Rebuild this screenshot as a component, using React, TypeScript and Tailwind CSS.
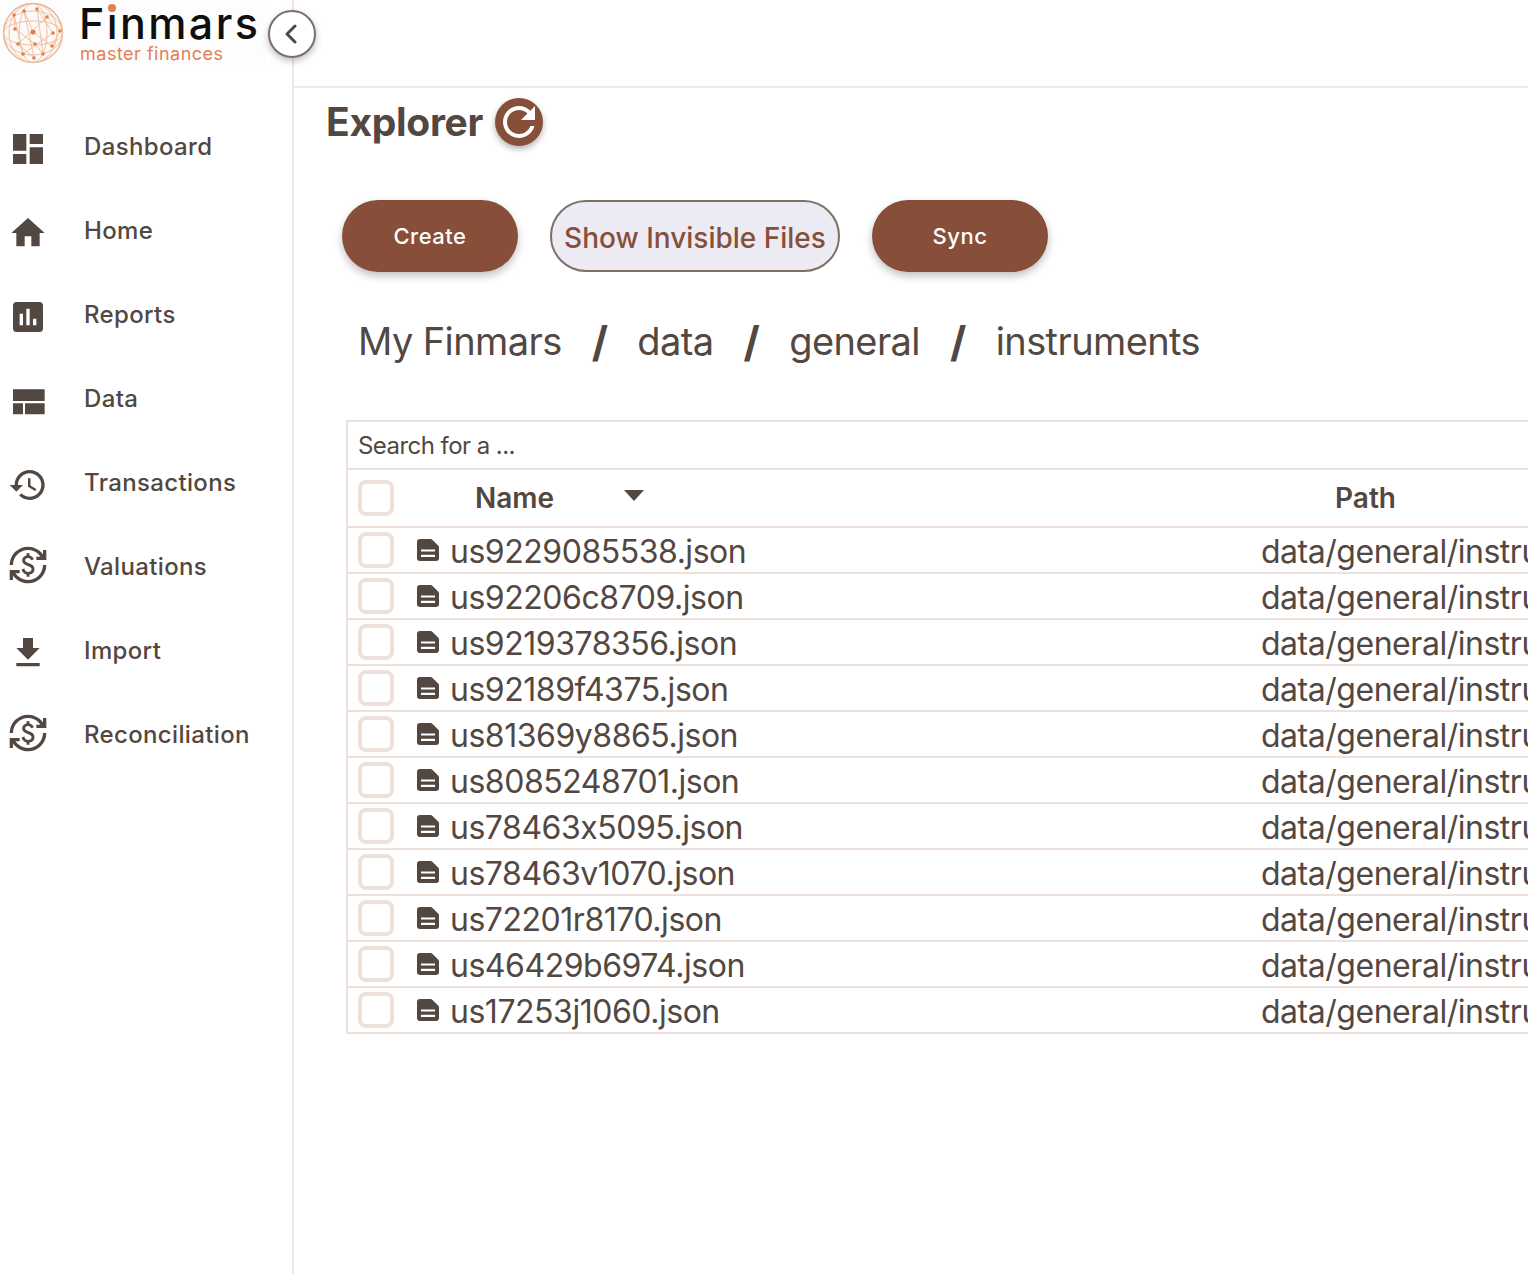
import type { ReactNode } from "react";

const files = [
  "us9229085538.json",
  "us92206c8709.json",
  "us9219378356.json",
  "us92189f4375.json",
  "us81369y8865.json",
  "us8085248701.json",
  "us78463x5095.json",
  "us78463v1070.json",
  "us72201r8170.json",
  "us46429b6974.json",
  "us17253j1060.json",
];

const exchangePath =
  "M12.89 11.1c-1.78-.59-2.64-.96-2.64-1.9 0-1.02 1.11-1.39 1.81-1.39 1.31 0 1.79.99 1.9 1.34l1.58-.67c-.15-.44-.82-1.91-2.66-2.23V5h-1.75v1.26c-2.6.56-2.62 2.85-2.62 2.96 0 2.27 2.25 2.91 3.35 3.31 1.58.56 2.28 1.07 2.28 2.03 0 1.13-1.05 1.61-1.98 1.61-1.82 0-2.34-1.87-2.4-2.09l-1.66.67c.63 2.19 2.28 2.78 3.02 2.96V19h1.75v-1.24c.52-.09 3.02-.59 3.02-3.22.01-1.39-.6-2.61-3-3.44zM3 21H1v-6h6v2H4.52c1.61 2.41 4.36 4 7.48 4 4.97 0 9-4.03 9-9h2c0 6.08-4.92 11-11 11-3.72 0-7.01-1.85-9-4.67V21zm-2-9C1 5.92 5.92 1 12 1c3.72 0 7.01 1.85 9 4.67V3h2v6h-6V7h2.48C17.87 4.59 15.12 3 12 3c-4.97 0-9 4.03-9 9H1z";

const navItems = [
  { label: "Dashboard", d: "M3 13h8V3H3v10zm0 8h8v-6H3v6zm10 0h8V11h-8v10zm0-18v6h8V3h-8z", icon: "h-10 w-10 shrink-0" },
  { label: "Home", d: "M10 20v-6h4v6h5v-8h3L12 3 2 12h3v8z", icon: "h-10 w-10 shrink-0" },
  { label: "Reports", d: "M19 3H5c-1.1 0-2 .9-2 2v14c0 1.1.9 2 2 2h14c1.1 0 2-.9 2-2V5c0-1.1-.9-2-2-2zM9 17H7v-7h2v7zm4 0h-2V7h2v10zm4 0h-2v-4h2v4z", icon: "h-10 w-10 shrink-0" },
  { label: "Data", d: "M3 5h19v7H3zM3 13.4h6v6.6H3zM10.2 13.4H22v6.6H10.2z", icon: "h-10 w-10 shrink-0" },
  { label: "Transactions", d: "M13 3c-4.97 0-9 4.03-9 9H1l3.89 3.89.07.14L9 12H6c0-3.87 3.13-7 7-7s7 3.13 7 7-3.13 7-7 7c-1.93 0-3.68-.79-4.94-2.06l-1.42 1.42C8.27 19.99 10.51 21 13 21c4.97 0 9-4.03 9-9s-4.03-9-9-9zm-1 5v5l4.28 2.54.72-1.21-3.5-2.08V8H12z", icon: "h-10 w-10 shrink-0" },
  { label: "Valuations", d: exchangePath, icon: "mb-2 h-10 w-10 shrink-0" },
  { label: "Import", d: "M19 9h-4V3H9v6H5l7 7 7-7zM5 18v2h14v-2H5z", icon: "h-10 w-10 shrink-0" },
  { label: "Reconciliation", d: exchangePath, icon: "mb-2 h-10 w-10 shrink-0" },
];

const nodes = [
  [14, 15], [24, 11], [37, 9], [47, 17], [15, 29], [33, 32], [53, 33], [18, 44], [35, 44], [52, 46], [23, 54], [34, 58], [43, 54], [60, 31],
];

function Globe() {
  return (
    <svg viewBox="0 0 66 66" className="h-[66px] w-[66px] shrink-0">
      <circle cx="33" cy="33" r="29.5" fill="#fdf9f6" stroke="#e9b594" strokeWidth="1.4" />
      <g fill="none" stroke="#ecbb9c" strokeWidth="0.9">
        <ellipse cx="33" cy="33" rx="14" ry="29.5" />
        <ellipse cx="33" cy="33" rx="24" ry="29.5" />
        <ellipse cx="33" cy="33" rx="29.5" ry="12" />
        <ellipse cx="33" cy="33" rx="29.5" ry="22" />
        {nodes.map(([x, y], i) => {
          const next = nodes[(i + 4) % nodes.length];
          return <line key={i} x1={x} y1={y} x2={next[0]} y2={next[1]} />;
        })}
      </g>
      <g fill="#e17f4f">
        {nodes.map(([x, y], i) => (
          <circle key={i} cx={x} cy={y} r={i === 5 ? 2.6 : 1.8} />
        ))}
      </g>
    </svg>
  );
}

function Icon({ d, className }: { d: string; className: string }) {
  return (
    <svg viewBox="0 0 24 24" fill="currentColor" className={className}>
      <path d={d} />
    </svg>
  );
}

function PillButton({ children }: { children: ReactNode }) {
  return (
    <button className="h-[72px] w-[176px] rounded-[36px] bg-[#874f3a] text-[22px] font-medium tracking-[0.5px] text-white shadow-[0_4px_8px_rgba(0,0,0,0.25)]">
      {children}
    </button>
  );
}

function Checkbox() {
  return <span className="block h-9 w-9 shrink-0 rounded-lg border-4 border-[#eee0da] bg-white" />;
}

function FileIcon() {
  return (
    <svg viewBox="0 0 22 22" className="h-[22px] w-[22px] shrink-0">
      <path
        fill="#524741"
        fillRule="evenodd"
        d="M3 0h10.6c.5 0 1 .2 1.4.6l6.4 6.2c.4.4.6.9.6 1.4V19a3 3 0 0 1-3 3H3a3 3 0 0 1-3-3V3a3 3 0 0 1 3-3zM4 10.4v2.2h14v-2.2H4zm0 5.4V18h14v-2.2H4z"
      />
    </svg>
  );
}

const Breadcrumb = ["My Finmars", "data", "general", "instruments"];

export default function App() {
  return (
    <div className="flex h-[1274px] w-[1528px] overflow-hidden bg-white font-['Inter',sans-serif] text-[#524741] [font-feature-settings:'calt'_0]">
      <aside className="relative w-[294px] shrink-0 border-r-2 border-[#eee6e2]">
        <div className="flex h-[72px] w-[265px] items-start gap-[13px] bg-[#fdfdfd]">
          <Globe />
          <div className="flex flex-col">
            <span className="relative mt-px block h-[44px] text-[43px] leading-[44px] font-medium tracking-[2.4px] whitespace-nowrap text-[#0f0f10]">
              Finmars
              <span className="absolute top-[3px] left-[29px] h-2 w-2 rounded-full bg-[#e17f4f]" />
            </span>
            <span className="pl-px text-[18px] leading-[18px] font-normal tracking-[0.5px] whitespace-nowrap text-[#e27f58]">
              master finances
            </span>
          </div>
        </div>
        <button className="absolute top-[10px] -right-[24px] z-10 flex h-12 w-12 items-center justify-center rounded-full border-2 border-[#7d6f69] bg-white shadow-[0_3px_7px_rgba(0,0,0,0.25)]">
          <svg viewBox="0 0 16 20" className="mr-[2px] h-5 w-4" fill="none" stroke="#524741" strokeWidth="3" strokeLinecap="round" strokeLinejoin="round">
            <path d="M12 2 4 10 12 18" />
          </svg>
        </button>
        <nav className="mt-[35px] flex flex-col">
          {navItems.map((item) => (
            <a key={item.label} className="flex h-[84px] items-center gap-[36px] pl-2">
              <Icon d={item.d} className={item.icon} />
              <span className="mb-1 text-[24px] font-medium tracking-[0.35px]">{item.label}</span>
            </a>
          ))}
        </nav>
      </aside>

      <main className="flex min-w-0 flex-1 flex-col">
        <div className="h-[88px] shrink-0 border-b-2 border-[#f0e9e3]" />

        <div className="mt-[10px] ml-[32px] flex h-12 items-center gap-3">
          <h1 className="text-[39px] font-bold tracking-[-0.3px]">Explorer</h1>
          <button className="flex h-12 w-12 items-center justify-center rounded-full bg-[#874f3a] text-white shadow-[0_3px_6px_rgba(0,0,0,0.3)]">
            <Icon
              d="M17.65 6.35C16.2 4.9 14.21 4 12 4c-4.42 0-7.99 3.58-7.99 8s3.57 8 7.99 8c3.73 0 6.84-2.55 7.73-6h-2.08c-.82 2.33-3.04 4-5.65 4-3.31 0-6-2.69-6-6s2.69-6 6-6c1.66 0 3.14.69 4.22 1.78L13 11h7V4l-2.35 2.35z"
              className="h-12 w-12"
            />
          </button>
        </div>

        <div className="mt-[54px] ml-12 flex gap-8">
          <PillButton>Create</PillButton>
          <button className="h-[72px] w-[290px] rounded-[36px] border-2 border-[#7f6f68] bg-[#ecebf4] pt-[3px] text-[28px] font-medium text-[#874f3a]">
            Show Invisible Files
          </button>
          <PillButton>Sync</PillButton>
        </div>

        <div className="mt-[39px] ml-[64px] flex h-[60px] items-center gap-[30px] text-[38px] tracking-[-0.6px]">
          {Breadcrumb.map((part, i) => (
            <div key={part} className="flex items-center gap-[30px]">
              {i > 0 && <span className="text-[42px] font-bold">/</span>}
              <span>{part}</span>
            </div>
          ))}
        </div>

        <div className="mt-[49px] ml-[52px] w-[1400px] shrink-0 border-y-2 border-l-2 border-[#eee0da]">
          <div className="flex h-[48px] items-center border-b-2 border-[#eee0da] pt-[2px] pl-2.5 text-[24px] tracking-[-0.55px]">
            Search for a ...
          </div>
          <div className="flex h-[58px] items-center border-b-2 border-[#eee0da] pl-2.5">
            <Checkbox />
            <span className="ml-[81px] w-[161px] text-[28px] font-semibold">Name</span>
            <span className="-mt-[6px] ml-[-12px] h-0 w-0 border-x-[10px] border-t-[11px] border-x-transparent border-t-[#524741]" />
            <span className="ml-[691px] text-[28px] font-semibold">Path</span>
          </div>
          {files.map((name, i) => (
            <div
              key={name}
              className={i < files.length - 1 ? "flex h-[46px] items-center border-b-2 border-[#eee0da] pl-2.5" : "flex h-[44px] items-center pl-2.5"}
            >
              <Checkbox />
              <span className="ml-[23px]">
                <FileIcon />
              </span>
              <span className="ml-[11px] w-[811px] shrink-0 pt-1 text-[32px] leading-[44px] tracking-[-0.47px]">{name}</span>
              <span className="pt-1 text-[32px] leading-[44px] tracking-[-0.47px] whitespace-nowrap">data/general/instruments/</span>
            </div>
          ))}
        </div>
      </main>
    </div>
  );
}
